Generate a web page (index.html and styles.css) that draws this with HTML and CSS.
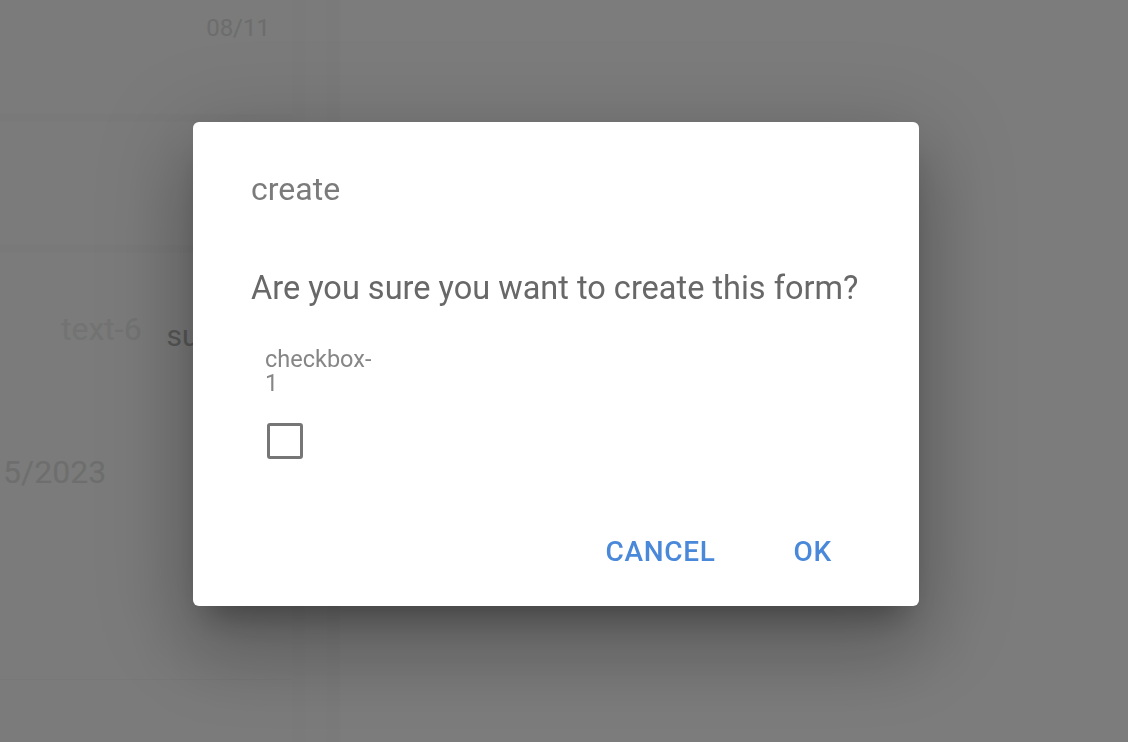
FILE: index.html
```html
<!DOCTYPE html>
<html lang="en">
<head>
<meta charset="utf-8">
<title>create</title>
<link rel="stylesheet" href="styles.css">
</head>
<body>
<div class="page">
  <div class="left-col">
    <div class="row row-top"><span class="date-small">08/11</span></div>
    <div class="band"></div>
    <div class="row row-mid"></div>
    <div class="band"></div>
    <div class="row row-main">
      <div class="cells">
        <span class="cell-label">text-6</span>
        <span class="cell-value">submitted</span>
      </div>
      <div class="date-big">5/2023</div>
    </div>
    <div class="row row-end"></div>
  </div>
  <div class="strip strip-a"></div>
  <div class="strip strip-b"></div>
  <div class="strip strip-c"></div>
  <div class="main-area"></div>
</div>

<div class="overlay">
  <div class="dialog" role="dialog">
    <h2 class="dialog-title">create</h2>
    <div class="dialog-content">
      <p class="message">Are you sure you want to create this form?</p>
      <div class="field">
        <div class="field-label">checkbox-1</div>
        <span class="checkbox"></span>
      </div>
    </div>
    <div class="actions">
      <button class="btn">CANCEL</button>
      <button class="btn">OK</button>
    </div>
  </div>
</div>
</body>
</html>
```

FILE: styles.css
```css
* { box-sizing: border-box; }
html, body {
  margin: 0;
  height: 100%;
  overflow: hidden;
}
body {
  font-family: Roboto, "Liberation Sans", sans-serif;
  background: #7b7c7b;
}

.page {
  display: grid;
  grid-template-columns: 292px 13px 22px 13px 1fr;
  height: 742px;
}
.left-col {
  display: flex;
  flex-direction: column;
  background: #7a7b7a;
  min-width: 0;
}
.row-top {
  height: 114px;
  display: flex;
  justify-content: flex-end;
  padding: 14px 22px 0 0;
}
.date-small {
  font-size: 24px;
  line-height: 28px;
  color: #6c6d6c;
}
.band {
  height: 8px;
  background: #787978;
}
.row-mid { height: 123px; }
.row-main {
  height: 427px;
  border-bottom: 1px solid #777877;
  padding-top: 57px;
}
.cells {
  display: flex;
  align-items: baseline;
  padding-left: 61px;
  white-space: nowrap;
}
.cell-label {
  font-size: 32px;
  line-height: 38px;
  color: #727372;
}
.cell-value {
  margin-left: 25px;
  font-size: 30px;
  color: #585958;
  position: relative;
  top: 6px;
}
.date-big {
  margin-top: 105px;
  padding-left: 3px;
  font-size: 32px;
  line-height: 38px;
  color: #6d6e6d;
}
.row-end { flex: 1; }

.strip-a { background: #797a79; }
.strip-b { background: #7a7b7a; }
.strip-c { background: #797a79; }
.main-area { background: #7b7c7b; }

.overlay {
  position: fixed;
  inset: 0;
  display: flex;
  align-items: center;
  justify-content: center;
  padding: 0 16px 14px 0;
}
.dialog {
  width: 726px;
  background: #fff;
  border-radius: 6px;
  box-shadow:
    0 22px 30px -14px rgba(0, 0, 0, 0.3),
    0 46px 76px 6px rgba(0, 0, 0, 0.16),
    0 18px 92px 16px rgba(0, 0, 0, 0.14);
}
.dialog-title {
  margin: 0;
  padding: 48px 58px 0;
  font-size: 32px;
  font-weight: 400;
  line-height: 38px;
  color: #7b7b7b;
}
.dialog-content {
  padding: 61px 58px 0;
}
.message {
  margin: 0;
  font-size: 32.5px;
  line-height: 38px;
  color: #686868;
}
.field {
  margin-top: 40px;
  padding-left: 14px;
  width: 124px;
}
.field-label {
  font-size: 23.5px;
  line-height: 24px;
  color: #868686;
}
.checkbox {
  display: block;
  margin: 28px 0 0 2px;
  width: 36px;
  height: 36px;
  border: 3px solid #767676;
  border-radius: 3px;
}
.actions {
  display: flex;
  justify-content: flex-end;
  gap: 30px;
  margin-top: 63px;
  padding: 0 63px 25px 0;
}
.btn {
  border: 0;
  background: transparent;
  padding: 13px 24px 12px;
  font-family: Roboto, "Liberation Sans", sans-serif;
  font-size: 28px;
  font-weight: 500;
  line-height: 34px;
  letter-spacing: 0.7px;
  color: #4a88da;
  cursor: pointer;
}
```
